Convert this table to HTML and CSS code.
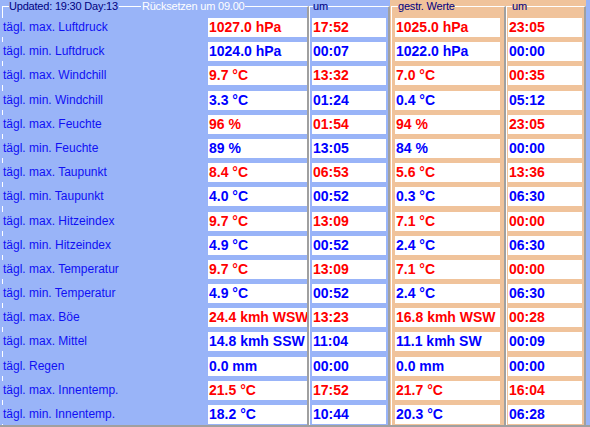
FILE: index.html
```html
<!DOCTYPE html>
<html lang="de">

<head>
  <meta charset="UTF-8">
  <title>Tageswerte</title>
  <link rel="stylesheet" href="styles.css">
</head>

<body>
  <div class="form">
    <!-- Blue panel: today's values -->
    <div class="panel panel-blue">
      <div class="group group-main">
        <div class="cap">
          <span class="ln ln-first w-main"></span>
          <span class="cap-txt">Updated: 19:30 Day:13</span>
          <span class="ln ln-mid"></span>
          <span class="cap-txt cap-white">Rücksetzen um 09.00</span>
          <span class="ln ln-last"></span>
        </div>
        <div class="rows rows-main">
          <div class="lbl">tägl. max. Luftdruck</div><div class="val red">1027.0 hPa</div>
          <div class="lbl">tägl. min. Luftdruck</div><div class="val blue">1024.0 hPa</div>
          <div class="lbl">tägl. max. Windchill</div><div class="val red">9.7 °C</div>
          <div class="lbl">tägl. min. Windchill</div><div class="val blue">3.3 °C</div>
          <div class="lbl">tägl. max. Feuchte</div><div class="val red">96 %</div>
          <div class="lbl">tägl. min. Feuchte</div><div class="val blue">89 %</div>
          <div class="lbl">tägl. max. Taupunkt</div><div class="val red">8.4 °C</div>
          <div class="lbl">tägl. min. Taupunkt</div><div class="val blue">4.0 °C</div>
          <div class="lbl">tägl. max. Hitzeindex</div><div class="val red">9.7 °C</div>
          <div class="lbl">tägl. min. Hitzeindex</div><div class="val blue">4.9 °C</div>
          <div class="lbl">tägl. max. Temperatur</div><div class="val red">9.7 °C</div>
          <div class="lbl">tägl. min. Temperatur</div><div class="val blue">4.9 °C</div>
          <div class="lbl">tägl. max. Böe</div><div class="val red">24.4 kmh WSW</div>
          <div class="lbl">tägl. max. Mittel</div><div class="val blue">14.8 kmh SSW</div>
          <div class="lbl">tägl. Regen</div><div class="val blue">0.0 mm</div>
          <div class="lbl">tägl. max. Innentemp.</div><div class="val red">21.5 °C</div>
          <div class="lbl">tägl. min. Innentemp.</div><div class="val blue">18.2 °C</div>
        </div>
      </div>

      <div class="group group-time">
        <div class="cap">
          <span class="ln ln-first w-time"></span>
          <span class="cap-txt">um</span>
          <span class="ln ln-last"></span>
        </div>
        <div class="rows rows-time">
          <div class="val red">17:52</div>
          <div class="val blue">00:07</div>
          <div class="val red">13:32</div>
          <div class="val blue">01:24</div>
          <div class="val red">01:54</div>
          <div class="val blue">13:05</div>
          <div class="val red">06:53</div>
          <div class="val blue">00:52</div>
          <div class="val red">13:09</div>
          <div class="val blue">00:52</div>
          <div class="val red">13:09</div>
          <div class="val blue">00:52</div>
          <div class="val red">13:23</div>
          <div class="val blue">11:04</div>
          <div class="val blue">00:00</div>
          <div class="val red">17:52</div>
          <div class="val blue">10:44</div>
        </div>
      </div>
    </div>

    <!-- Orange panel: yesterday's values -->
    <div class="panel panel-orange">
      <div class="group group-prev">
        <div class="cap">
          <span class="ln ln-first w-prev"></span>
          <span class="cap-txt">gestr. Werte</span>
          <span class="ln ln-last"></span>
        </div>
        <div class="rows rows-prev">
          <div class="val red">1025.0 hPa</div>
          <div class="val blue">1022.0 hPa</div>
          <div class="val red">7.0 °C</div>
          <div class="val blue">0.4 °C</div>
          <div class="val red">94 %</div>
          <div class="val blue">84 %</div>
          <div class="val red">5.6 °C</div>
          <div class="val blue">0.3 °C</div>
          <div class="val red">7.1 °C</div>
          <div class="val blue">2.4 °C</div>
          <div class="val red">7.1 °C</div>
          <div class="val blue">2.4 °C</div>
          <div class="val red">16.8 kmh WSW</div>
          <div class="val blue">11.1 kmh SW</div>
          <div class="val blue">0.0 mm</div>
          <div class="val red">21.7 °C</div>
          <div class="val blue">20.3 °C</div>
        </div>
      </div>

      <div class="group group-prevtime">
        <div class="cap">
          <span class="ln ln-first w-prevtime"></span>
          <span class="cap-txt">um</span>
          <span class="ln ln-last"></span>
        </div>
        <div class="rows rows-prevtime">
          <div class="val red">23:05</div>
          <div class="val blue">00:00</div>
          <div class="val red">00:35</div>
          <div class="val blue">05:12</div>
          <div class="val red">23:05</div>
          <div class="val blue">00:00</div>
          <div class="val red">13:36</div>
          <div class="val blue">06:30</div>
          <div class="val red">00:00</div>
          <div class="val blue">06:30</div>
          <div class="val red">00:00</div>
          <div class="val blue">06:30</div>
          <div class="val red">00:28</div>
          <div class="val blue">00:09</div>
          <div class="val blue">00:00</div>
          <div class="val red">16:04</div>
          <div class="val blue">06:28</div>
        </div>
      </div>
    </div>

    <div class="edge"></div>
  </div>
</body>

</html>
```

FILE: styles.css
```css
/* Base */
* {
  box-sizing: border-box;
}

body {
  margin: 0;
  width: 590px;
  height: 427px;
  overflow: hidden;
  background: #99b4f8;
  font-family: 'Liberation Sans', Arial, sans-serif;
}

.form {
  display: flex;
  height: 427px;
  border-bottom: 2px solid #a0a0a0;
}

/* Panels */
.panel {
  display: flex;
  height: 100%;
}

.panel-blue {
  width: 390px;
  padding-left: 2px;
  background: #99b4f8;
}

.panel-orange {
  width: 196px;
  padding-left: 1px;
  background: #f0c39b;
}

.edge {
  width: 4px;
}

/* Group boxes */
.group {
  display: flex;
  flex-direction: column;
  height: 100%;
}

.group-main { width: 307px; }
.group-time { width: 81px; }
.group-prev { width: 115px; }
.group-prevtime { width: 80px; }

.cap {
  display: flex;
  height: 13px;
  font-size: 11px;
  line-height: 13px;
  letter-spacing: -0.2px;
  color: #000080;
  white-space: nowrap;
}

.cap-txt {
  flex: none;
}

.cap-white {
  color: #fff;
}

.ln {
  flex: 1;
  align-self: flex-end;
  height: 7px;
  border-top: 1px solid #fff;
}

.ln-first {
  flex: none;
  border-left: 1px solid #fff;
}

.ln-mid {
  flex: none;
  width: 22px;
  margin: 0 1px;
}

.ln-last {
  border-right: 2px solid #a0a0a0;
}

.w-main { width: 7px; }
.w-time { width: 4px; }
.w-prev { width: 7px; }
.w-prevtime { width: 6px; }

/* Rows */
.rows {
  flex: 1;
  display: grid;
  grid-auto-rows: 19px;
  row-gap: 5.2px;
  align-content: start;
  padding-top: 5px;
  border-left: 1px solid #fff;
  border-right: 2px solid #a0a0a0;
}

.rows-main {
  grid-template-columns: 205px 99px;
}

.rows-time {
  grid-template-columns: 74px;
  padding-left: 2px;
}

.rows-prev {
  grid-template-columns: 105px;
  padding-left: 3px;
}

.rows-prevtime {
  grid-template-columns: 74px;
  padding-left: 1px;
}

.lbl {
  margin-left: -1px;
  padding-left: 1px;
  background: #99b4f8;
  font-size: 12px;
  line-height: 19px;
  color: #1010f4;
  white-space: nowrap;
}

.val {
  background: #fff;
  padding-left: 1px;
  font-size: 14px;
  font-weight: bold;
  line-height: 19px;
  white-space: nowrap;
  overflow: hidden;
}

.red {
  color: #ff0000;
}

.blue {
  color: #0000ff;
}
```
